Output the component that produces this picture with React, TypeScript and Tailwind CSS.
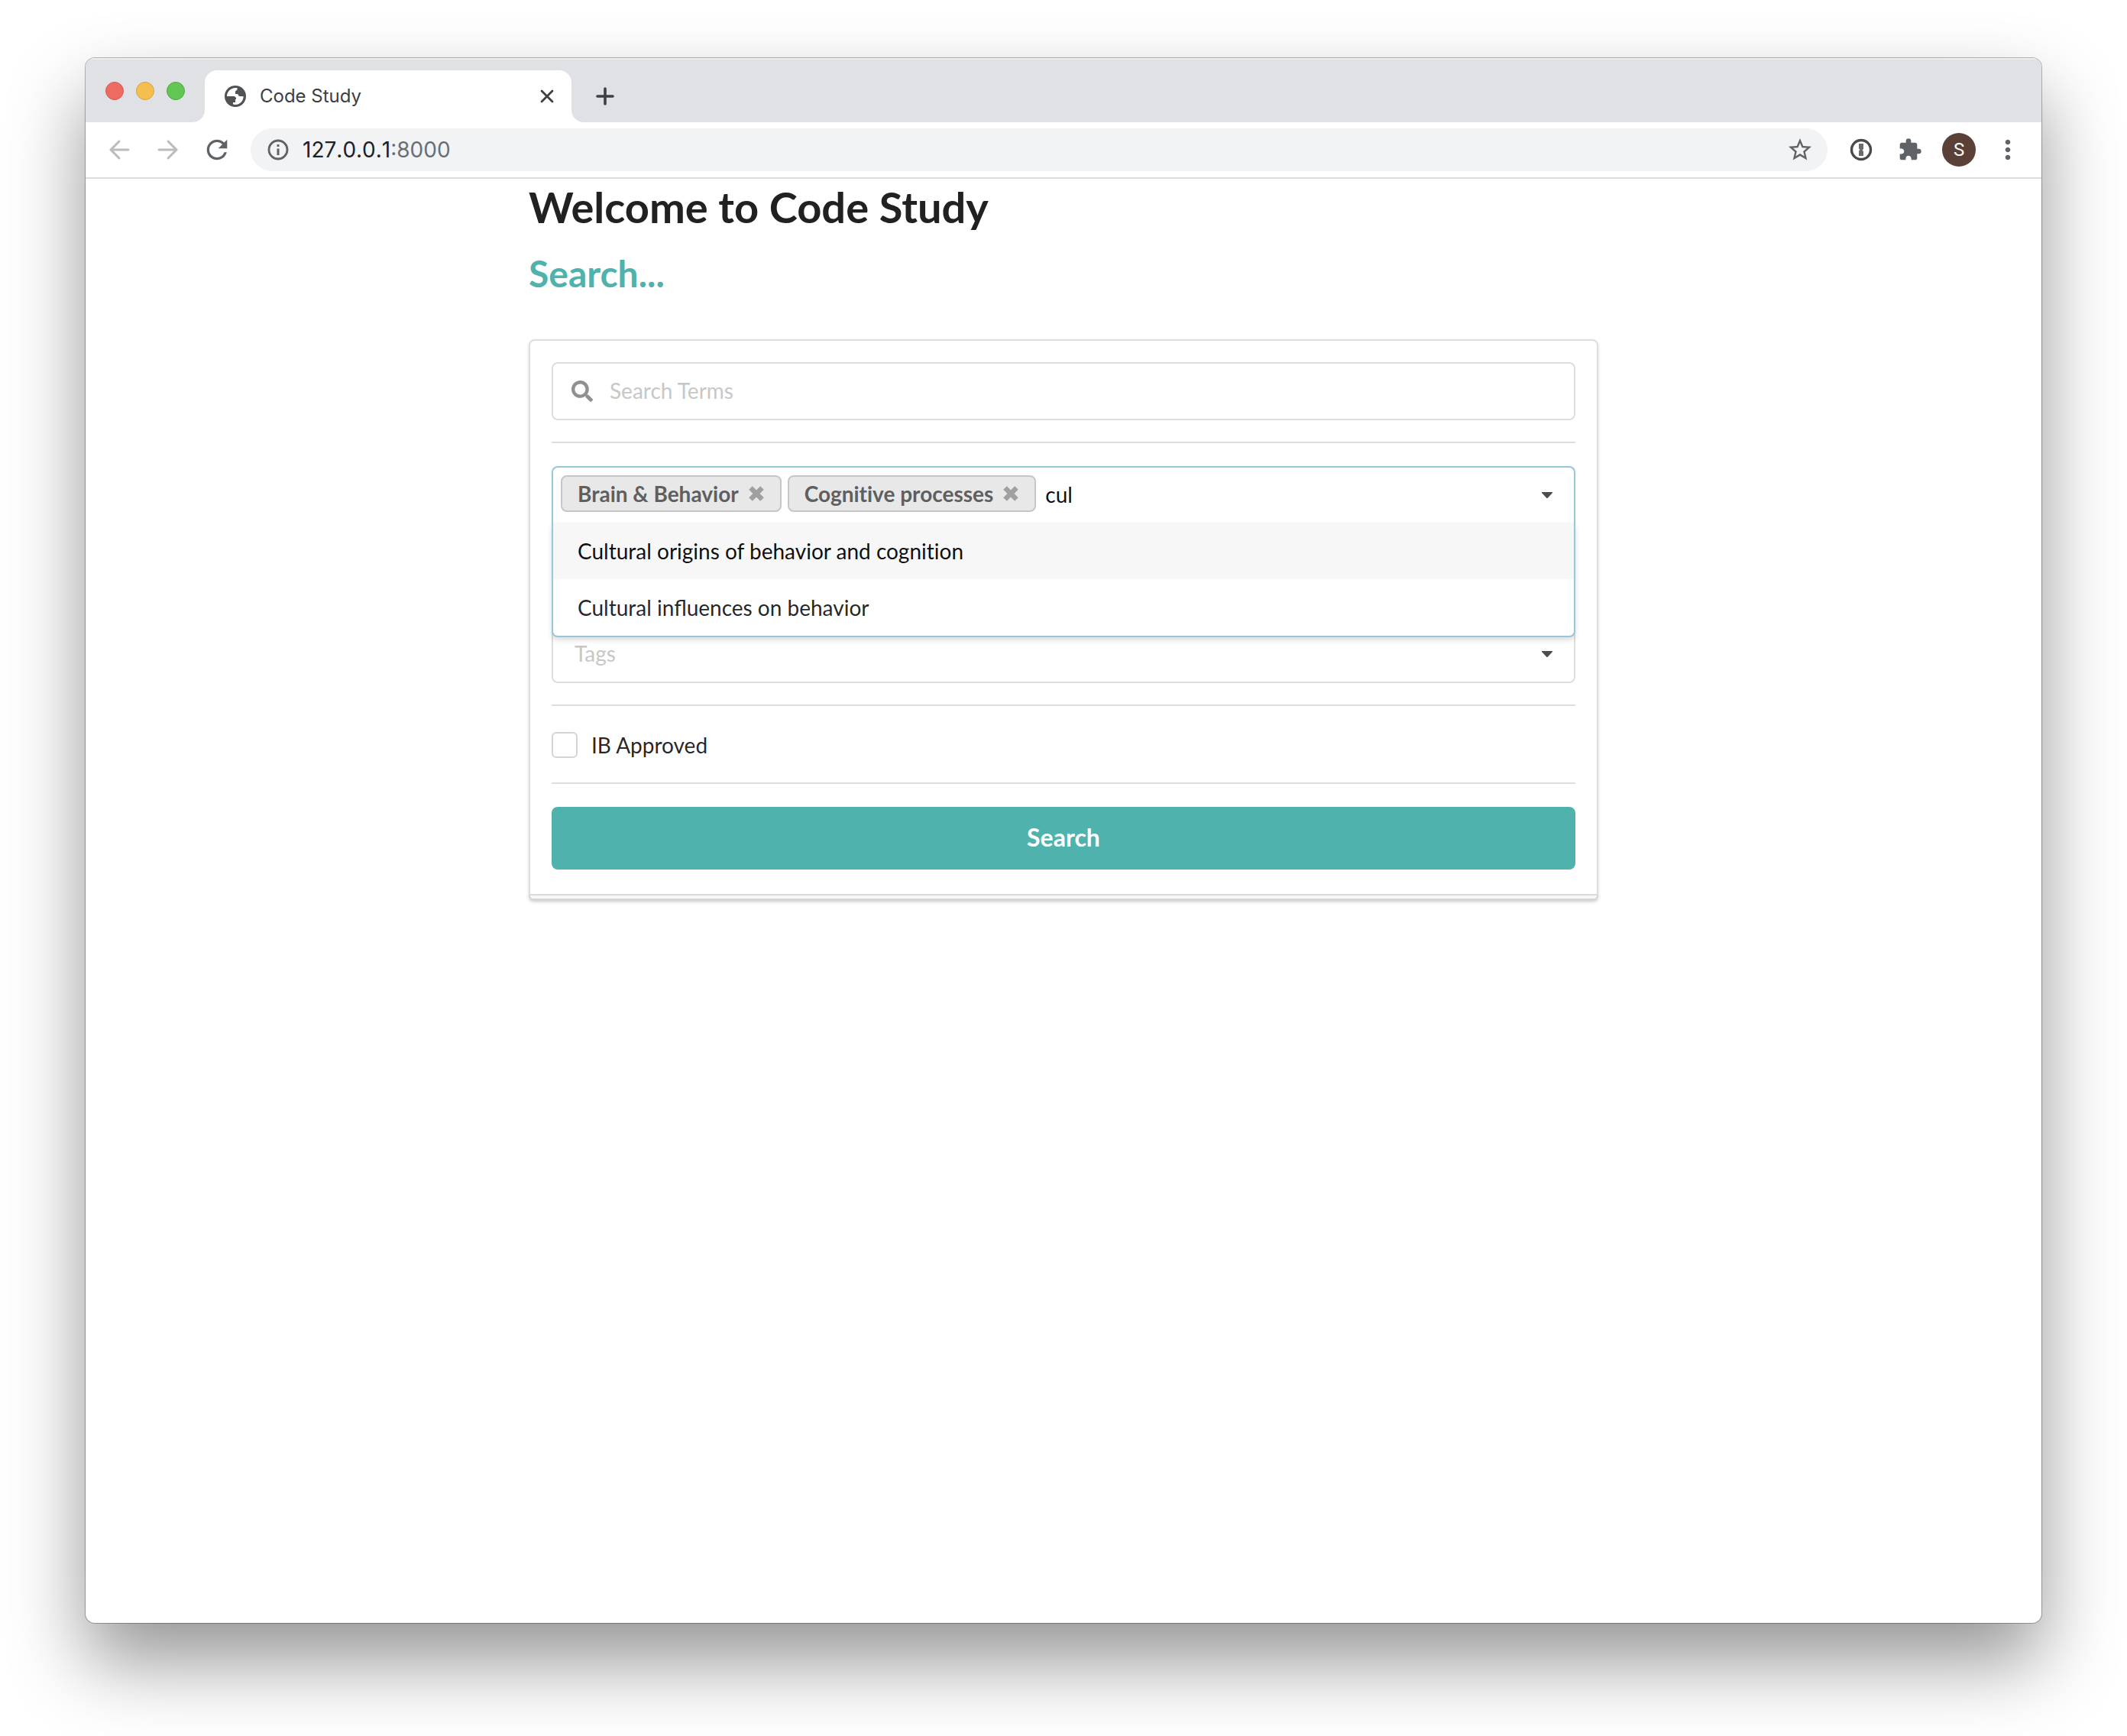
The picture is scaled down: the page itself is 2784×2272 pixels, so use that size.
import React, { useState } from "react";
import { MdRefresh, MdStarBorder, MdExtension, MdMoreVert } from "react-icons/md";
import { FaSearch } from "react-icons/fa";

const OPTIONS = ["Cultural origins of behavior and cognition", "Cultural influences on behavior"];
const ICON_BUTTON = "flex size-16 items-center justify-center text-[#5f6368]";

function Globe() {
  return (
    <svg viewBox="0 0 28 28" className="size-7" aria-hidden="true">
      <circle cx="14" cy="14" r="14" fill="#505256" />
      <path d="M3 14C3 8 8 3 14 3h2.500v2.500L14 7.500v3.500h3l2 3h5.500c.5 6-4.500 11-10.500 11l-3-.5V22h3v-4h1v-2l-2-2z" fill="#fff" />
    </svg>
  );
}

function Info() {
  return (
    <svg viewBox="0 0 28 28" className="size-7" fill="none" stroke="#5f6368" aria-hidden="true">
      <circle cx="14" cy="14" r="12" strokeWidth="2.800" />
      <path d="M14 12.500V21M14 7v3" strokeWidth="3" />
    </svg>
  );
}

function Arrow({ flip = false }: { flip?: boolean }) {
  return (
    <svg viewBox="0 0 28 28" className={flip ? "size-7 rotate-180" : "size-7"} fill="none" stroke="#babcbe" strokeWidth="3" strokeLinecap="round">
      <path d="M26 14H3M14 3L3 14l11 11" />
    </svg>
  );
}

function OnePassword() {
  return (
    <svg viewBox="0 0 30 30" className="size-[30px]" fill="none">
      <circle cx="15" cy="15" r="12.500" stroke="#4a4a4a" strokeWidth="3.400" />
      <path d="M12 7h6v7l-1.500 1.500L18 17v6h-6v-6.500l1.500-1.500L12 13.500z" fill="#6b6b6b" />
    </svg>
  );
}

function TabCurve({ right = false }: { right?: boolean }) {
  return (
    <svg viewBox="0 0 16 16" className={right ? "size-4 -scale-x-100" : "size-4"} aria-hidden="true">
      <path d="M16 0v16H0A16 16 0 0 0 16 0z" fill="#fff" />
    </svg>
  );
}

function Caret() {
  return (
    <svg viewBox="0 0 14 8" className="h-2 w-[14px]" aria-hidden="true">
      <path d="M0 0h14v1L7.500 8h-1L0 1z" fill="#4c4c4c" />
    </svg>
  );
}

function TabStrip() {
  return (
    <div className="flex h-[84px] bg-[#dfe1e5] shadow-[inset_0_2px_0_#eceef0]">
      <div className="flex h-full items-center gap-4 pt-[2px] pl-[26px] pr-[10px]">
        <button aria-label="Close window" className="size-6 rounded-full border border-[#d9584e] bg-[#ed6b60]" />
        <button aria-label="Minimize window" className="size-6 rounded-full border border-[#d9a23e] bg-[#f5bf4f]" />
        <button aria-label="Zoom window" className="size-6 rounded-full border border-[#50a93c] bg-[#62c655]" />
      </div>
      <div className="flex items-end pt-4">
        <TabCurve />
        <div className="flex h-full w-[480px] items-center rounded-t-2xl bg-white pl-[26px] pr-5">
          <Globe />
          <span className="ml-[18px] flex-1 font-[Inter,sans-serif] text-2xl text-[#3c4043]">Code Study</span>
          <button aria-label="Close tab" className="flex size-6 items-center justify-center">
            <svg viewBox="0 0 18 18" className="size-[18px]" stroke="#3c4043" strokeWidth="2.800" strokeLinecap="round"><path d="M2 2l14 14M16 2L2 16" /></svg>
          </button>
        </div>
        <TabCurve right />
      </div>
      <button aria-label="New tab" className="flex items-center pl-4 pt-4">
        <svg viewBox="0 0 24 24" className="size-6" stroke="#3c4043" strokeWidth="3.600" strokeLinecap="round"><path d="M12 2v20M2 12h20" /></svg>
      </button>
    </div>
  );
}

function Toolbar() {
  return (
    <div className="flex h-[74px] items-center border-b-2 border-[#dadce0] bg-white pl-3 pr-3">
      <button aria-label="Back" className={ICON_BUTTON}><Arrow /></button>
      <button aria-label="Forward" className={ICON_BUTTON}><Arrow flip /></button>
      <button aria-label="Reload" className={ICON_BUTTON}><MdRefresh className="size-10" /></button>
      <div className="ml-3 flex h-14 flex-1 items-center rounded-full bg-[#f1f3f4] pl-[22px] pr-[18px]">
        <Info />
        <a href="#address" className="ml-[18px] flex-1 font-[Inter,sans-serif] text-[28px] leading-8 text-[#202124] [font-kerning:none]">
          127.0.0.1<span className="text-[#6a6e73]">:8000</span>
        </a>
        <button aria-label="Bookmark this page" className="text-[#5f6368]"><MdStarBorder className="size-9" /></button>
      </div>
      <div className="ml-3 flex">
        <button aria-label="Password manager" className={ICON_BUTTON}><OnePassword /></button>
        <button aria-label="Extensions" className={ICON_BUTTON}><MdExtension className="size-8" /></button>
        <button aria-label="Profile" className={ICON_BUTTON}>
          <span className="flex size-11 items-center justify-center rounded-full bg-[#5b4037] font-[Roboto,sans-serif] text-2xl text-white">S</span>
        </button>
        <button aria-label="Menu" className={ICON_BUTTON}><MdMoreVert className="size-10" /></button>
      </div>
    </div>
  );
}

function Tag({ label, onRemove }: { label: string; onRemove: () => void }) {
  return (
    <span className="flex h-12 items-center gap-3 rounded-lg border-2 border-[#c6c6c6] bg-[#e8e8e8] px-5 text-[28px] leading-8 font-bold text-[#5f5f5f] [font-variant-ligatures:none]">
      {label}
      <button type="button" aria-label={"Remove " + label} onClick={onRemove}>
        <svg viewBox="0 0 22 22" className="size-[22px]" stroke="#a0a0a0" strokeWidth="6.500"><path d="M3.500 3.500l15 15M18.500 3.500l-15 15" /></svg>
      </button>
    </span>
  );
}

function Divider() {
  return <hr className="border-t-2 border-[#dededf]" />;
}

function SearchForm() {
  const [tags, setTags] = useState(["Brain & Behavior", "Cognitive processes"]);
  const [query, setQuery] = useState("cul");
  return (
    <div>
      <form onSubmit={(e) => e.preventDefault()} className="rounded-t-lg border-2 border-[#dededf] bg-white p-7 shadow-[0_2px_4px_0_rgba(34,36,38,0.15)]">
        <label className="flex h-[76px] items-center rounded-lg border-2 border-[#dededf] pl-6">
          <FaSearch className="size-7 text-[#909090]" />
          <input aria-label="Search Terms" placeholder="Search Terms" className="ml-[22px] flex-1 bg-transparent pb-[2px] text-[28px] outline-none placeholder:text-[#c7c7c7]" />
        </label>
        <div className="py-7"><Divider /></div>

        <div className="relative z-10 mt-[2px] flex h-[76px] items-center rounded-t-lg border-2 border-b-0 border-[#96c8da] bg-white pr-7 pb-[2px] pl-[10px]">
          <div className="flex flex-1 items-center gap-2 pb-1">
            {tags.map((t) => <Tag key={t} label={t} onRemove={() => setTags(tags.filter((x) => x !== t))} />)}
            <input aria-label="Topics" value={query} onChange={(e) => setQuery(e.target.value)} className="ml-1 min-w-0 flex-1 bg-transparent pt-[2px] text-[28px] leading-10 text-black/95 outline-none" />
          </div>
          <Caret />
          <ul role="listbox" aria-label="Topics" className="absolute top-[72px] -right-[2px] -left-[2px] rounded-b-lg border-2 border-t-0 border-[#96c8da] bg-white text-[28px] leading-8 text-black/87 shadow-[0_4px_6px_0_rgba(34,36,38,0.15)]">
            <li role="option" aria-selected="true" className="flex h-[74px] items-center bg-[#f7f7f7] px-8 text-black/95 [font-variant-ligatures:none]">{OPTIONS[0]}</li>
            <li role="option" aria-selected="false" className="flex h-[74px] items-center px-8">{OPTIONS[1]}</li>
          </ul>
        </div>

        <div className="mt-[132px] flex h-[76px] items-center rounded-lg border-2 border-[#dededf] pr-7 pl-7">
          <input aria-label="Tags" placeholder="Tags" className="min-w-0 flex-1 bg-transparent pb-[2px] text-[28px] outline-none placeholder:text-[#c7c7c7]" />
          <Caret />
        </div>
        <div className="py-7"><Divider /></div>

        <label className="flex h-11 items-center gap-[18px] pt-[2px] text-[28px] text-black/87">
          <input type="checkbox" className="size-[34px] appearance-none rounded-md border-2 border-[#d4d4d5] bg-white" />
          IB Approved
        </label>
        <div className="py-7"><Divider /></div>

        <button className="mt-[2px] mb-1 h-[82px] w-full rounded-lg bg-[#4fb2ad] pb-[2px] text-[32px] font-bold text-white">Search</button>
      </form>
      <div className="h-[6px] rounded-b-md border-2 border-t-0 border-[#d4d4d5] bg-[#f7f7f7] shadow-[0_2px_4px_0_rgba(34,36,38,0.25)]" />
    </div>
  );
}

export default function App() {
  return (
    <div className="min-h-screen bg-white px-28 pt-[76px] pb-[148px]">
      <div className="flex min-h-[2048px] flex-col rounded-xl bg-white shadow-[0_0_0_1px_rgba(0,0,0,0.28),0_50px_100px_0_rgba(0,0,0,0.42)]">
        <div className="overflow-hidden rounded-t-xl">
          <TabStrip />
          <Toolbar />
        </div>
        <main className="mx-auto w-full max-w-[1400px] font-[Lato,sans-serif]">
          <h1 className="text-[56px] leading-[74px] font-bold text-[#212121]">Welcome to Code Study</h1>
          <h2 className="mt-5 mb-14 text-[48px] leading-[60px] font-bold text-[#4fb2ad]">Search...</h2>
          <SearchForm />
        </main>
      </div>
    </div>
  );
}
